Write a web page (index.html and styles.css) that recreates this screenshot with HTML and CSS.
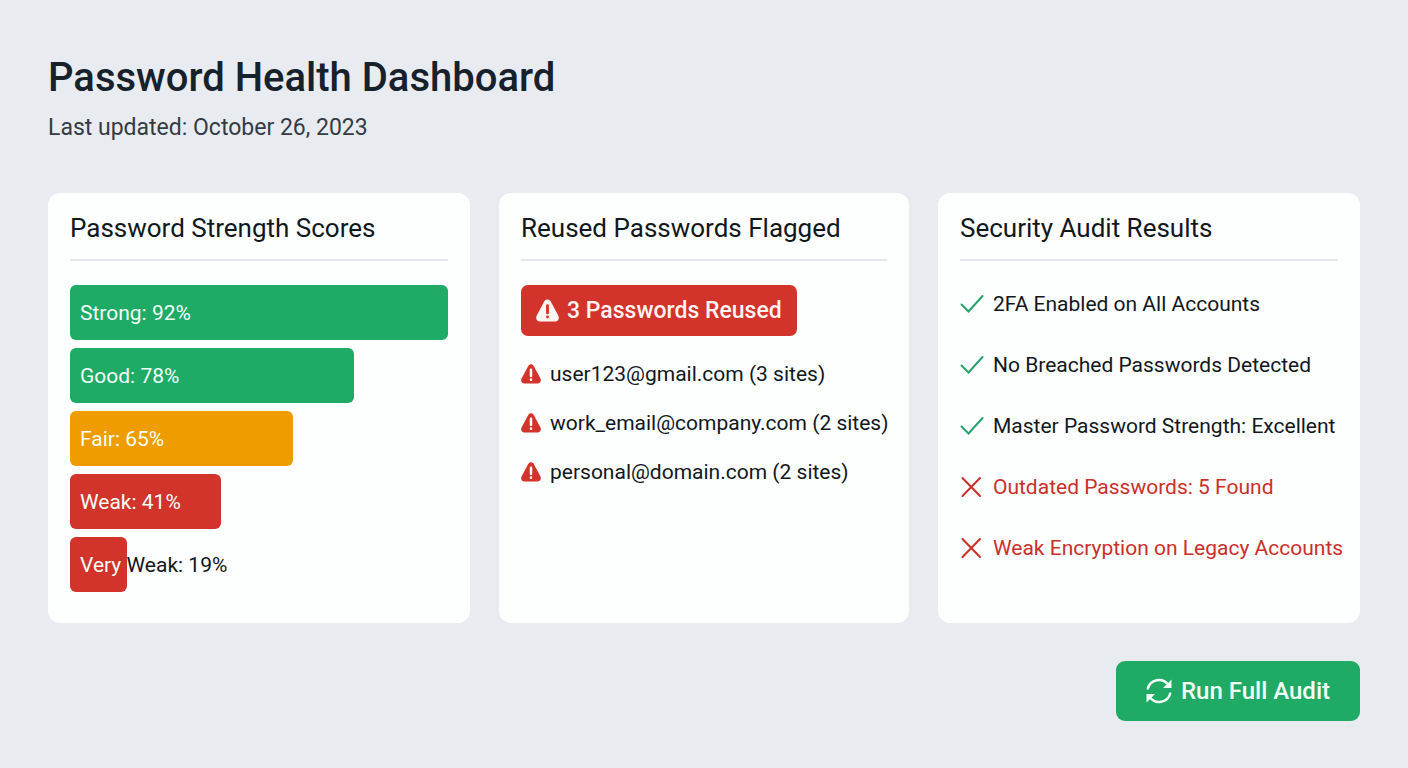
FILE: index.html
```html
<!DOCTYPE html>
<html lang="en">
<head>
    <meta charset="UTF-8">
    <meta name="viewport" content="width=device-width, initial-scale=1.0">
    <title>Password Health Dashboard</title>
    <link rel="stylesheet" href="styles.css">
</head>
<body>
    <!-- Shared icons -->
    <svg class="sprite" aria-hidden="true">
        <symbol id="warning" viewBox="0 0 24 24">
            <path fill="currentColor" d="M8.700 2.300C10.200-.2 13.800-.2 15.300 2.300L23.200 17.200C24.800 20.200 23.200 23.500 19.800 23.500H4.200C.8 23.500-.8 20.200.8 17.200Z"/>
            <path class="mark" d="M12 7v7.500M12 18.700v.2"/>
        </symbol>
        <symbol id="check" viewBox="0 0 24 24">
            <path d="M1.500 12.500 8.500 19.500 22.500 4"/>
        </symbol>
        <symbol id="cross" viewBox="0 0 24 24">
            <path d="M2.500 3 20 21M20 3 2.500 21"/>
        </symbol>
    </svg>

    <header>
        <h1>Password Health Dashboard</h1>
        <p>Last updated: October 26, 2023</p>
    </header>

    <main>
        <section class="card">
            <h2>Password Strength Scores</h2>
            <div class="bars">
                <div class="bar good" style="width: 100%">Strong: 92%</div>
                <div class="bar good" style="width: 75%">Good: 78%</div>
                <div class="bar fair" style="width: 59%">Fair: 65%</div>
                <div class="bar weak" style="width: 40%">Weak: 41%</div>
                <div class="bar weak" style="width: 15%">Very <span class="spill">Weak: 19%</span></div>
            </div>
        </section>

        <section class="card">
            <h2>Reused Passwords Flagged</h2>
            <div class="alert">
                <svg class="icon"><use href="#warning"/></svg>
                3 Passwords Reused
            </div>
            <ul class="reused">
                <li><svg class="icon"><use href="#warning"/></svg>user123@gmail.com (3 sites)</li>
                <li><svg class="icon"><use href="#warning"/></svg>work_email@company.com (2 sites)</li>
                <li><svg class="icon"><use href="#warning"/></svg>personal@domain.com (2 sites)</li>
            </ul>
        </section>

        <section class="card">
            <h2>Security Audit Results</h2>
            <ul class="audit">
                <li><svg class="icon"><use href="#check"/></svg>2FA Enabled on All Accounts</li>
                <li><svg class="icon"><use href="#check"/></svg>No Breached Passwords Detected</li>
                <li><svg class="icon"><use href="#check"/></svg>Master Password Strength: Excellent</li>
                <li class="fail"><svg class="icon"><use href="#cross"/></svg>Outdated Passwords: 5 Found</li>
                <li class="fail"><svg class="icon"><use href="#cross"/></svg>Weak Encryption on Legacy Accounts</li>
            </ul>
        </section>
    </main>

    <footer>
        <button type="button">
            <svg class="icon" viewBox="0 0 26 26" aria-hidden="true">
                <path class="arc" d="M1.800 10.500A11.500 11.500 0 0 1 22 6.500M24.200 15.500A11.500 11.500 0 0 1 4 19.500"/>
                <path fill="currentColor" d="M25.500 1.500V10H17ZM.5 24.500V16H9Z"/>
            </svg>
            Run Full Audit
        </button>
    </footer>
</body>
</html>
```
FILE: styles.css
```css
* {
    box-sizing: border-box;
}
body {
    margin: 0;
    padding: 48px;
    background: #e8ebf0;
    color: #11181d;
    font-family: Roboto, 'Liberation Sans', sans-serif;
    font-size: 21px;
    line-height: 28px;
}
h1, h2, p, ul {
    margin: 0;
    padding: 0;
    font-weight: 400;
}
ul {
    list-style: none;
}
.sprite {
    position: absolute;
    width: 0;
    height: 0;
}
.icon {
    flex: none;
}

/* Page heading */
h1 {
    color: #17212b;
    font-size: 40px;
    font-weight: 500;
    line-height: 60px;
}
header p {
    margin-top: 6px;
    color: #343b43;
    font-size: 23px;
}

/* Cards */
main {
    display: grid;
    grid-template-columns: 35fr 34fr 35fr;
    gap: 29px;
    margin-top: 51px;
}
.card {
    min-width: 0;
    padding: 18px 22px 31px;
    background: #fdfefe;
    border-radius: 12px;
}
h2 {
    margin-bottom: 24px;
    padding-bottom: 14px;
    border-bottom: 2px solid #e5e7ec;
    font-size: 26px;
    line-height: 34px;
}

/* Strength bars */
.bars {
    display: grid;
    gap: 8px;
}
.bar {
    height: 55px;
    padding-left: 10px;
    border-radius: 6px;
    color: #f4fff8;
    line-height: 56px;
    white-space: nowrap;
}
.good {
    background: #1faa66;
}
.fair {
    background: #ee9c00;
}
.weak {
    background: #d2332a;
}
.spill {
    color: #11181d;
}

/* Reused passwords */
.alert {
    --mark: #d2332a;
    display: flex;
    align-items: center;
    gap: 8px;
    width: fit-content;
    height: 51px;
    padding: 0 15px;
    background: #d2332a;
    border-radius: 7px;
    color: #fff5f3;
    font-size: 23px;
    font-weight: 500;
}
.alert .icon {
    width: 23px;
    height: 23px;
}
.mark {
    fill: none;
    stroke: var(--mark, #fff);
    stroke-width: 3;
    stroke-linecap: round;
}
.reused {
    display: grid;
    gap: 21px;
    margin-top: 24px;
}
li {
    display: flex;
    align-items: center;
    white-space: nowrap;
}
.reused li {
    gap: 9px;
}
.reused .icon {
    width: 20px;
    height: 20px;
    color: #d2332a;
}

/* Audit results */
.audit {
    display: grid;
    gap: 33px;
    margin-top: 29px;
}
.audit li {
    gap: 9px;
}
.audit .icon {
    width: 24px;
    height: 24px;
    fill: none;
    stroke: #27a36c;
    stroke-width: 2;
    stroke-linecap: round;
}
.audit .fail {
    color: #c9302a;
}
.audit .fail .icon {
    stroke: #c9302a;
}

/* Run audit button */
footer {
    display: flex;
    justify-content: flex-end;
    margin-top: 38px;
}
button {
    display: flex;
    align-items: center;
    gap: 9px;
    height: 60px;
    padding: 0 30px;
    background: #1faa66;
    border: none;
    border-radius: 9px;
    color: #f4fff8;
    font: inherit;
    font-size: 24px;
    font-weight: 500;
    cursor: pointer;
}
button .icon {
    width: 26px;
    height: 26px;
}
.arc {
    fill: none;
    stroke: currentColor;
    stroke-width: 2.5;
    stroke-linecap: round;
}
```
